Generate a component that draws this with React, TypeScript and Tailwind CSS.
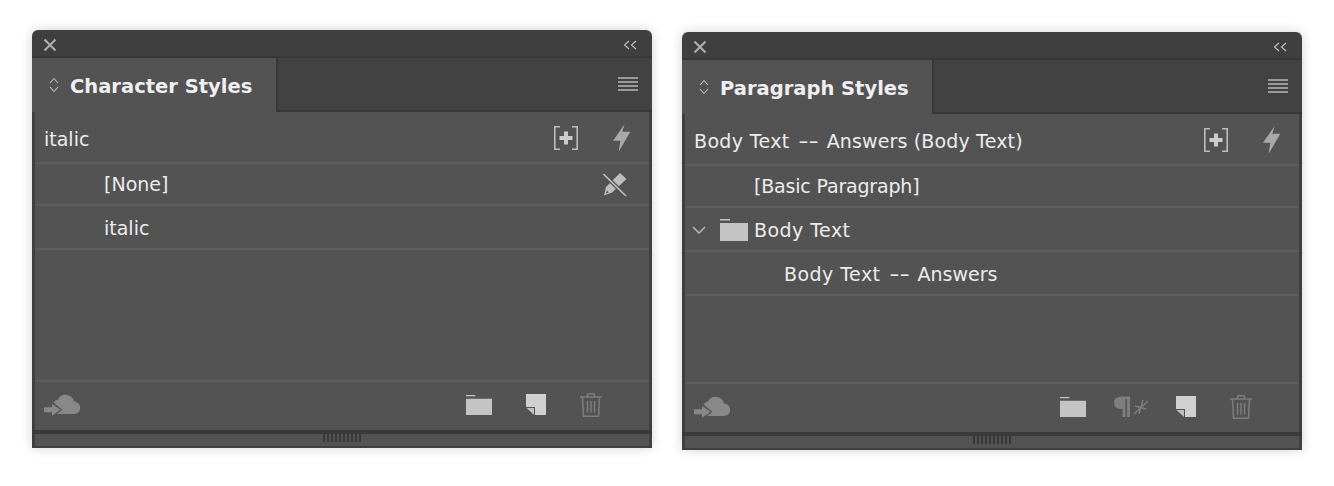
const textFont = "font-['DejaVu_Sans',sans-serif]"

function CloseIcon() {
  return (
    <svg width="14" height="14" viewBox="0 0 14 14" className="shrink-0">
      <path d="M1.5 1.5 L12.5 12.5 M12.5 1.5 L1.5 12.5" stroke="#adadad" strokeWidth="2.2" />
    </svg>
  )
}

function CollapseIcon() {
  return (
    <svg width="14" height="10" viewBox="0 0 14 10">
      <path d="M6 1 L1.5 5 L6 9 M13 1 L8.5 5 L13 9" stroke="#c4c4c4" strokeWidth="1.1" fill="none" />
    </svg>
  )
}

function StepperIcon() {
  return (
    <svg width="12" height="18" viewBox="0 0 12 18" className="shrink-0">
      <path d="M2 7 L6 2.5 L10 7 M2 11 L6 15.5 L10 11" stroke="#bdbdbd" strokeWidth="1.1" fill="none" />
    </svg>
  )
}

function MenuIcon() {
  return (
    <svg width="20" height="14" viewBox="0 0 20 14">
      <path d="M0 1 H20 M0 5 H20 M0 9 H20 M0 13 H20" stroke="#b8b8b8" strokeWidth="1.6" />
    </svg>
  )
}

function PlusBracketIcon() {
  return (
    <svg width="24" height="24" viewBox="0 0 24 24">
      <path d="M6 0.8 H0.8 V23.2 H6 M18 0.8 H23.2 V23.2 H18" stroke="#bdbdbd" strokeWidth="1.6" fill="none" />
      <path d="M12 5.5 V18.5 M5.5 12 H18.5" stroke="#cccccc" strokeWidth="4" />
    </svg>
  )
}

function BoltIcon() {
  return (
    <svg width="18" height="28" viewBox="0 0 18 28">
      <path d="M11.7 0 L0 16.7 H7.3 L5.7 27.7 L17.3 7.7 H9.3 Z" fill="#a8a8a8" />
    </svg>
  )
}

function PencilSlashIcon() {
  return (
    <svg width="24" height="23" viewBox="0 0 24 23">
      <path d="M17 0 L23.5 6 L9 19.5 L1 22.5 L3 14 Z" fill="#bdbdbd" />
      <path d="M4 17.5 L5.5 19.5 L2.8 20.5 Z" fill="#535353" />
      <path d="M0.5 1 L23 23" stroke="#535353" strokeWidth="4" />
      <path d="M0.5 1 L23 23" stroke="#bdbdbd" strokeWidth="1.6" />
    </svg>
  )
}

function FolderIcon({ className }: { className: string }) {
  return (
    <svg viewBox="0 0 28 22" preserveAspectRatio="none" className={className}>
      <path d="M0 0 H10 V1.5 H0 Z M0 4 H28 V22 H0 Z" fill="#c4c4c4" />
    </svg>
  )
}

function NewStyleIcon() {
  return (
    <svg width="20" height="21" viewBox="0 0 20 21">
      <path d="M0 0 H20 V21 H9 V13 H0 Z" fill="#d0d0d0" />
      <path d="M0.5 14 H8 V21 Z" fill="#c0c0c0" />
    </svg>
  )
}

function TrashIcon() {
  return (
    <svg width="22" height="24" viewBox="0 0 22 24">
      <path d="M0 4 H22 M7.5 4 V1.5 Q7.5 0.75 8.5 0.75 H13.5 Q14.5 0.75 14.5 1.5 V4" stroke="#7e7e7e" strokeWidth="1.5" fill="none" />
      <path d="M2.5 4 L3.5 23.2 H18.5 L19.5 4" stroke="#7e7e7e" strokeWidth="1.5" fill="none" />
      <path d="M7.5 8 V19.5 M11 8 V19.5 M14.5 8 V19.5" stroke="#7e7e7e" strokeWidth="1.5" />
    </svg>
  )
}

function CloudIcon() {
  return (
    <svg width="36" height="22" viewBox="0 0 36 22">
      <path d="M11 20 H30 A6.2 6.2 0 0 0 30 7.6 A8.6 8.6 0 0 0 14 5.4 A6 6 0 0 0 9.5 8.5 L18.5 15.7 L13 20 Z" fill="#888888" />
      <path d="M0 13.3 H8 V10 L16.7 15.7 L8 21.7 V18.3 H0 Z" fill="#888888" />
    </svg>
  )
}

function ClearOverrideIcon() {
  return (
    <svg width="34" height="21" viewBox="0 0 34 21">
      <path d="M8 0.5 H16 V21 H13 V3 H11.5 V21 H8.5 V13 Q0 13 0 6.7 Q0 0.5 8 0.5 Z" fill="#7e7e7e" />
      <path d="M20 18 L34 5 M21 10 L32 13 M29 4 L25 18" stroke="#7e7e7e" strokeWidth="1.5" />
    </svg>
  )
}

function Grip() {
  return (
    <div className="flex gap-[2px]">
      {Array.from({ length: 10 }).map((_, i) => (
        <div key={i} className="h-[8px] w-[2px] bg-[#383838]" />
      ))}
    </div>
  )
}

function Panel({ title, tabWidth, current, children, footer }: {
  title: string
  tabWidth: string
  current: React.ReactNode
  children: React.ReactNode
  footer: React.ReactNode
}) {
  return (
    <div className={`flex h-[418px] w-[620px] flex-col overflow-hidden rounded-t-[6px] bg-[#3f3f3f] shadow-[0_0_12px_rgba(0,0,0,0.18)] ${textFont}`}>
      <div className="flex h-[26px] shrink-0 items-center justify-between pl-[11px] pr-[15px] pt-[4px]">
        <CloseIcon />
        <CollapseIcon />
      </div>
      <div className="flex h-[56px] shrink-0 border-t-2 border-t-[#383838] bg-[#424242]">
        <div className={`flex h-full items-center gap-[10px] border-r-2 border-[#383838] bg-[#535353] pl-[16px] text-[#efefef] ${tabWidth}`}>
          <StepperIcon />
          <span className="pt-[3px] text-[19.5px] font-bold leading-none">{title}</span>
        </div>
        <div className="flex flex-1 items-center justify-end border-b-2 border-[#383838] pr-[14px]">
          <MenuIcon />
        </div>
      </div>
      <div className="flex flex-1 flex-col border-x-[3px] border-[#3f3f3f] bg-[#535353]">
        <div className="flex h-[52px] shrink-0 items-center border-b-2 border-[#5e5e5e] pl-[9px] pr-[18px] pt-[1px] text-[19px] text-[#ececec]">
          <span className="flex-1 pt-[3px]">{current}</span>
          <div className="mr-[35px] flex"><PlusBracketIcon /></div>
          <BoltIcon />
        </div>
        <div className="flex-1">{children}</div>
        <div className="flex h-[50px] shrink-0 items-center border-t-2 border-[#5e5e5e] pb-[3px] pl-[9px]">
          <CloudIcon />
          {footer}
        </div>
      </div>
      <div className="h-[4px] shrink-0 bg-[#3a3a3a]" />
      <div className="flex h-[12px] shrink-0 justify-center border-x-[3px] border-[#3f3f3f] bg-[#535353]">
        <Grip />
      </div>
      <div className="h-[2px] shrink-0" />
    </div>
  )
}

function Row({ indent, children, icon }: { indent: string; children: React.ReactNode; icon?: React.ReactNode }) {
  return (
    <div className={`flex h-[44px] items-center border-b-2 border-[#5e5e5e] text-[19px] text-[#ececec] first:h-[42px] ${indent}`}>
      <span className="flex-1">{children}</span>
      {icon}
    </div>
  )
}

function Dashes() {
  return <span className="inline-block w-[25px] scale-x-[1.5] text-center">--</span>
}

export default function App() {
  return (
    <div className="flex h-[486px] w-[1334px] items-start gap-[30px] overflow-hidden bg-white pl-[32px] pt-[30px]">
      <Panel
        title="Character Styles"
        tabWidth="w-[246px]"
        current="italic"
        footer={
          <div className="ml-[386px] flex items-center gap-[34px]">
            <FolderIcon className="h-[20px] w-[26px]" />
            <NewStyleIcon />
            <TrashIcon />
          </div>
        }
      >
        <Row indent="pl-[69px] pr-[22px]" icon={<PencilSlashIcon />}>[None]</Row>
        <Row indent="pl-[69px] pt-[2px]">italic</Row>
      </Panel>
      <div className="mt-[2px]">
        <Panel
          title="Paragraph Styles"
          tabWidth="w-[252px]"
          current={
            <>
              <span className="tracking-[0.35px]">Body Text</span> <Dashes /> <span className="tracking-[0.15px]">Answers (Body Text)</span>
            </>
          }
          footer={
            <div className="ml-[330px] flex items-center">
              <FolderIcon className="h-[20px] w-[26px]" />
              <div className="ml-[28px]"><ClearOverrideIcon /></div>
              <div className="ml-[28px]"><NewStyleIcon /></div>
              <div className="ml-[34px]"><TrashIcon /></div>
            </div>
          }
        >
          <Row indent="pl-[69px]"><span className="tracking-[-0.18px]">[Basic Paragraph]</span></Row>
          <Row indent="pl-[6px] pt-[2px]">
            <span className="flex items-center tracking-[0.45px]">
              <svg width="16" height="10" viewBox="0 0 16 10" className="mr-[13px]">
                <path d="M2 2 L8 8 L14 2" stroke="#b0b0b0" strokeWidth="1.7" fill="none" />
              </svg>
              <FolderIcon className="mr-[6px] h-[22px] w-[28px]" />
              Body Text
            </span>
          </Row>
          <Row indent="pl-[99px] pt-[2px]">
            <span className="tracking-[0.45px]">Body Text</span> <Dashes /> Answers
          </Row>
        </Panel>
      </div>
    </div>
  )
}
